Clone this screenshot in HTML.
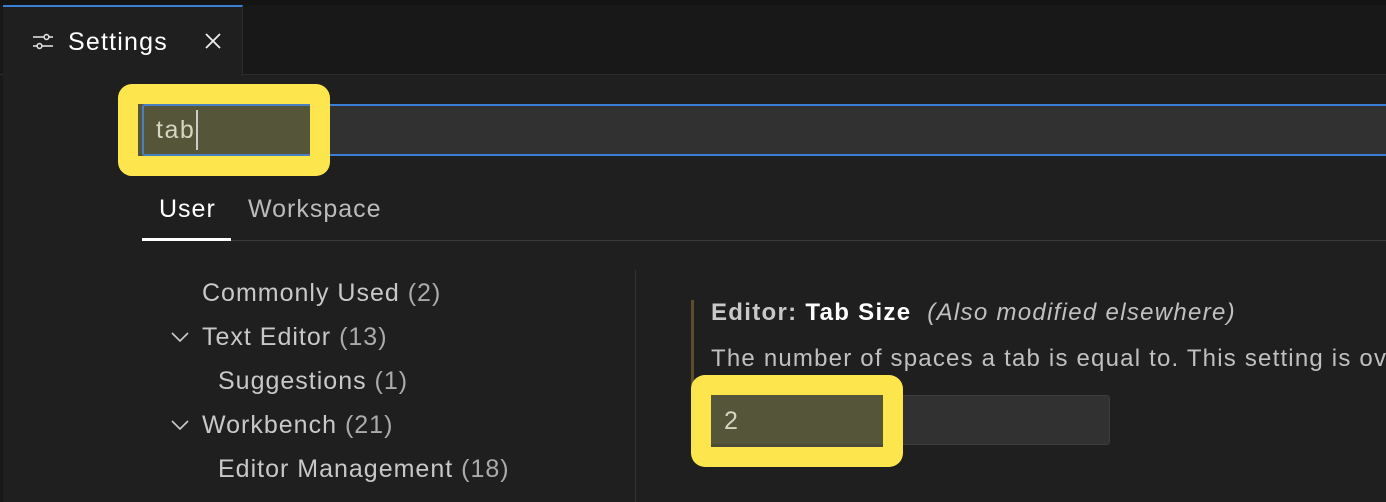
<!DOCTYPE html>
<html><head><style>
*{margin:0;padding:0;box-sizing:border-box}
body{width:1386px;height:502px;background:#1f1f1f;font-family:"Liberation Sans",sans-serif;overflow:hidden;position:relative;color:#ccc}
.a{position:absolute}
.t{white-space:nowrap;font-size:25px;line-height:30px;letter-spacing:1px}
</style></head><body>
<div class="a" style="left:0;top:0;width:1386px;height:75px;background:#181818;border-bottom:1px solid #2b2b2b"></div>
<div class="a" style="left:0;top:0;width:1386px;height:5px;background:#141414"></div>
<div class="a" style="left:3px;top:5px;width:240px;height:71px;background:#1f1f1f;border-top:2px solid #3b7ed6;border-right:1px solid #2b2b2b"></div>
<svg class="a" style="left:32px;top:31px" width="22" height="22" viewBox="0 0 22 22"><g stroke="#ddd" stroke-width="1.6" fill="none"><line x1="1" y1="6" x2="12" y2="6"/><circle cx="14.5" cy="6" r="2.4"/><line x1="17" y1="6" x2="21" y2="6"/><line x1="1" y1="15" x2="5" y2="15"/><circle cx="7.5" cy="15" r="2.4"/><line x1="10" y1="15" x2="21" y2="15"/></g></svg>
<div class="a t" style="left:68px;top:27px;color:#fff;letter-spacing:1.2px">Settings</div>
<svg class="a" style="left:204px;top:32px" width="18" height="18" viewBox="0 0 18 18"><path d="M2 2L16 16M16 2L2 16" stroke="#eee" stroke-width="1.8"/></svg>
<div class="a" style="left:0;top:76px;width:3px;height:426px;background:#181818"></div>
<!-- search -->
<div class="a" style="left:142px;top:104px;width:1244px;height:52px;background:#313131;border:2px solid #3b7ed6;border-right:none"></div>
<div class="a" style="left:118px;top:84px;width:212px;height:92px;background:#fde64d;border-radius:14px"></div>
<div class="a" style="left:138px;top:104px;width:172px;height:52px;background:#555539"></div>
<div class="a" style="left:142px;top:104px;width:168px;height:52px;border:2px solid #4a7fc0;border-right:none;border-radius:3px 0 0 3px"></div>
<div class="a t" style="left:156px;top:115px;color:#d6d6c0;letter-spacing:1.5px">tab</div>
<div class="a" style="left:196px;top:110px;width:2px;height:40px;background:#ccc"></div>
<!-- tabs -->
<div class="a t" style="left:159px;top:194px;color:#fff">User</div>
<div class="a t" style="left:248px;top:194px;color:#bbb">Workspace</div>
<div class="a" style="left:142px;top:240px;width:1244px;height:1px;background:#3a3a3a"></div>
<div class="a" style="left:142px;top:238px;width:89px;height:3px;background:#fff"></div>
<!-- tree -->
<div class="a t" style="left:202px;top:278px;color:#c8c8c8">Commonly Used <span style="color:#aaa">(2)</span></div>
<svg class="a" style="left:170px;top:330px" width="20" height="14"><path d="M2 3L10 11L18 3" stroke="#ccc" stroke-width="1.6" fill="none"/></svg>
<div class="a t" style="left:202px;top:322px;color:#c8c8c8">Text Editor <span style="color:#aaa">(13)</span></div>
<div class="a t" style="left:218px;top:366px;color:#c8c8c8">Suggestions <span style="color:#aaa">(1)</span></div>
<svg class="a" style="left:170px;top:418px" width="20" height="14"><path d="M2 3L10 11L18 3" stroke="#ccc" stroke-width="1.6" fill="none"/></svg>
<div class="a t" style="left:202px;top:410px;color:#c8c8c8">Workbench <span style="color:#aaa">(21)</span></div>
<div class="a t" style="left:218px;top:454px;color:#c8c8c8">Editor Management <span style="color:#aaa">(18)</span></div>
<div class="a" style="left:635px;top:270px;width:1px;height:232px;background:#333"></div>
<!-- setting -->
<div class="a" style="left:691px;top:300px;width:3px;height:95px;background:#5e4d2a"></div>
<div class="a t" style="left:711px;top:298px;font-size:24px;letter-spacing:1.3px;color:#c8c8c8;font-weight:bold">Editor: <span style="color:#fff">Tab Size</span> <i style="font-weight:normal;color:#c0c0c0">&nbsp;(Also modified elsewhere)</i></div>
<div class="a" style="left:711px;top:344px;width:675px;height:30px;overflow:hidden"><div class="t" style="font-size:24px;letter-spacing:1.2px;color:#c0c0c0">The number of spaces a tab is equal to. This setting is overridden</div></div>
<div class="a" style="left:711px;top:395px;width:399px;height:50px;background:#313131;border:1px solid #3c3c3c;border-radius:3px"></div>
<div class="a" style="left:691px;top:375px;width:212px;height:92px;background:#fde64d;border-radius:14px"></div>
<div class="a" style="left:711px;top:395px;width:172px;height:52px;background:#555539;border-bottom:3px solid #4a4a38"></div>
<div class="a t" style="left:724px;top:406px;color:#d6d6c0">2</div>
</body></html>
